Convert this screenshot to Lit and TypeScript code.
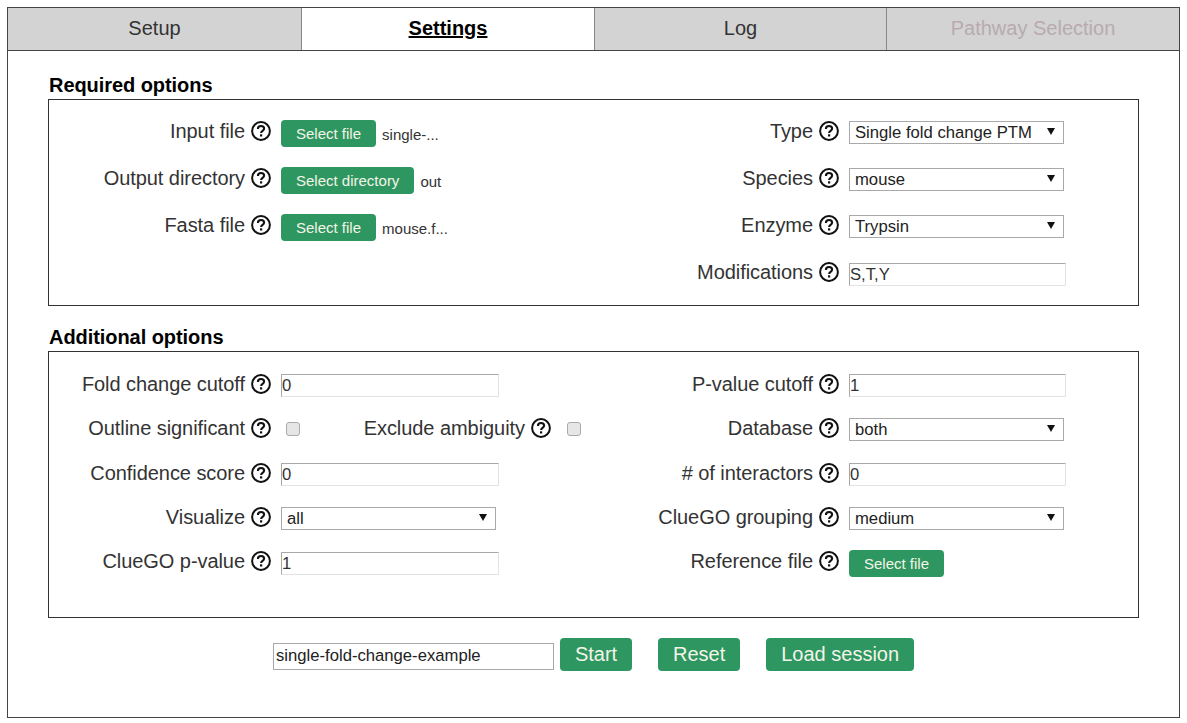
import { LitElement, html, css, svg, nothing } from 'lit';
import { customElement } from 'lit/decorators.js';

const helpIcon = html`<svg class="help" viewBox="0 0 20 20" width="20" height="20" aria-hidden="true">
  ${svg`<circle cx="10" cy="10" r="8.9" fill="none" stroke="#111" stroke-width="2"></circle>
  <path d="M6.9 8c0-1.9 1.4-3 3.2-3s3 1.1 3 2.6c0 2.3-3 2.3-3 4.5" fill="none" stroke="#111" stroke-width="2.1"></path>
  <rect x="9" y="13.3" width="2.2" height="2.2" fill="#111"></rect>`}
</svg>`;

const label = (text: string, up = false) =>
  html`<div class="label ${up ? 'up' : ''}"><span>${text}</span>${helpIcon}</div>`;

const fileBtn = (text: string, name?: string) => html`<div class="ctl">
  <button class="btn">${text}</button>${name ? html`<span class="fname">${name}</span>` : nothing}
</div>`;

const select = (value: string) => html`<div class="ctl">
  <div class="select">
    <select><option>${value}</option></select>
    <span class="arrow"></span>
  </div>
</div>`;

const input = (value: string, narrow = false) => html`<div class="ctl">
  <input class="text ${narrow ? 'narrow' : ''}" .value=${value} />
</div>`;

@customElement('app-root')
export class AppRoot extends LitElement {
  static styles = css`
    :host {
      display: block;
      font-family: 'Liberation Sans', Arial, sans-serif;
      color: #333;
    }
    .page {
      margin: 7px 7px 0 7px;
      height: 711px;
      border: 1px solid #444;
      box-sizing: border-box;
      background: #fff;
    }
    .tabs {
      display: grid;
      grid-template-columns: 293px 293px 292px 1fr;
      height: 43px;
      border-bottom: 1px solid #444;
      box-sizing: border-box;
      background: #d3d3d3;
    }
    .tab {
      display: flex;
      align-items: center;
      justify-content: center;
      font-size: 20px;
      color: #333;
      border-left: 1px solid #888;
      padding-bottom: 1px;
    }
    .tab:first-child { border-left: none; }
    .tab.active {
      background: #fff;
      color: #000;
      font-weight: bold;
      text-decoration: underline;
    }
    .tab.disabled { color: #b8aab0; }
    .body { padding: 22px 40px 0 40px; }
    h2 {
      margin: 0 0 2px 0;
      padding-left: 1px;
      font-size: 20px;
      line-height: 24px;
      font-weight: bold;
      letter-spacing: -0.06px;
      color: #000;
    }
    .box {
      border: 1px solid #333;
      box-sizing: border-box;
      width: 1091px;
    }
    .box.required { height: 207px; padding-top: 17px; margin-bottom: 19px; }
    .box.additional { height: 267px; padding-top: 18px; }
    .grid {
      display: grid;
      grid-template-columns: 222px 340px 228px 1fr;
    }
    .required .grid { grid-auto-rows: 47px; }
    .additional .grid { grid-template-rows: 45px 44px 45px 44px 44px; }
    .label {
      display: flex;
      align-items: flex-start;
      justify-content: flex-end;
      gap: 6px;
      font-size: 20px;
      line-height: 24px;
      letter-spacing: -0.06px;
      color: #333;
      white-space: nowrap;
      padding-top: 2px;
    }
    .label.up { padding-top: 1px; }
    .help { flex: none; margin-top: 2px; }
    .ctl {
      display: flex;
      align-items: flex-start;
      padding-left: 10px;
      padding-top: 3px;
      min-width: 0;
    }
    .btn {
      border: none;
      border-radius: 4px;
      background: #2e9660;
      color: #f4f4e8;
      font-family: inherit;
      font-size: 15px;
      height: 27px;
      padding: 0 15px;
      margin: 0;
    }
    .additional .btn { margin-top: -1px; }
    .fname {
      font-size: 15px;
      color: #333;
      margin-left: 6px;
      line-height: 29px;
    }
    .select { position: relative; width: 215px; height: 23px; }
    .required .select { margin-top: 1px; }
    select {
      appearance: none;
      width: 100%;
      height: 100%;
      border: 1px solid #a9a9a9;
      border-radius: 0;
      background: #fff;
      font-family: inherit;
      font-size: 16.67px;
      color: #222;
      padding: 0 0 0 5px;
      margin: 0;
    }
    .arrow {
      position: absolute;
      right: 9px;
      top: 7px;
      width: 0;
      height: 0;
      border-left: 4px solid transparent;
      border-right: 4px solid transparent;
      border-top: 7px solid #111;
    }
    input.text {
      box-sizing: border-box;
      width: 218px;
      height: 23px;
      border: 1px solid #e3e3e3;
      border-left-color: #a9a9a9;
      border-top-color: #a9a9a9;
      padding: 0;
      margin: 1px 0 0 0;
      font-family: inherit;
      font-size: 16.67px;
      color: #333;
      outline: none;
    }
    input.text.narrow { width: 217px; }
    .required input.text { margin-top: 2px; }
    .check {
      display: block;
      width: 12px;
      height: 12px;
      border: 1px solid #aaa;
      border-radius: 3px;
      background: #e6e6e6;
      margin: 4px 0 0 5px;
    }
    .ctl.checks {
      display: grid;
      grid-template-columns: 20px 250px 30px;
    }
    .ctl.checks .label { padding-top: 0; margin-top: -2px; }
    .ctl.checks .check:last-child { margin-left: 16px; }
    .footer {
      display: flex;
      align-items: flex-start;
      margin-top: 20px;
      padding-left: 225px;
    }
    .session {
      box-sizing: border-box;
      width: 281px;
      height: 27px;
      margin: 5px 6px 0 0;
      border: 1px solid #a9a9a9;
      padding: 0 0 2px 2px;
      font-family: inherit;
      font-size: 16.67px;
      color: #222;
      outline: none;
    }
    .btn.big {
      font-size: 20px;
      height: 33px;
      padding: 0 15px;
      margin-right: 26px;
    }
    .btn.big:first-of-type { width: 72px; padding: 0; }
  `;

  render() {
    return html`
      <div class="page">
        <div class="tabs">
          <div class="tab">Setup</div>
          <div class="tab active">Settings</div>
          <div class="tab">Log</div>
          <div class="tab disabled">Pathway Selection</div>
        </div>
        <div class="body">
          <h2>Required options</h2>
          <div class="box required">
            <div class="grid">
              ${label('Input file')}${fileBtn('Select file', 'single-...')}
              ${label('Type')}${select('Single fold change PTM')}
              ${label('Output directory')}${fileBtn('Select directory', 'out')}
              ${label('Species')}${select('mouse')}
              ${label('Fasta file')}${fileBtn('Select file', 'mouse.f...')}
              ${label('Enzyme')}${select('Trypsin')}
              <div></div><div></div>
              ${label('Modifications')}${input('S,T,Y', true)}
            </div>
          </div>
          <h2>Additional options</h2>
          <div class="box additional">
            <div class="grid">
              ${label('Fold change cutoff')}${input('0')}
              ${label('P-value cutoff')}${input('1', true)}
              ${label('Outline significant', true)}
              <div class="ctl checks">
                <span class="check"></span>
                ${label('Exclude ambiguity')}
                <span class="check"></span>
              </div>
              ${label('Database', true)}${select('both')}
              ${label('Confidence score')}${input('0')}
              ${label('# of interactors')}${input('0', true)}
              ${label('Visualize', true)}${select('all')}
              ${label('ClueGO grouping', true)}${select('medium')}
              ${label('ClueGO p-value', true)}${input('1')}
              ${label('Reference file', true)}${fileBtn('Select file')}
            </div>
          </div>
          <div class="footer">
            <input class="session" .value=${'single-fold-change-example'} />
            <button class="btn big">Start</button>
            <button class="btn big">Reset</button>
            <button class="btn big">Load session</button>
          </div>
        </div>
      </div>
    `;
  }
}
